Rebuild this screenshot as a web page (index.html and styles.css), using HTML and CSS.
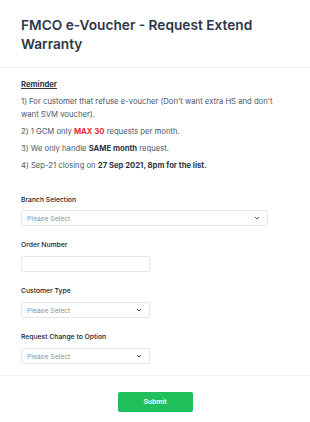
FILE: index.html
```html
<!DOCTYPE html>
<html lang="en">

<head>
    <meta charset="UTF-8">
    <title>FMCO e-Voucher</title>
    <link rel="stylesheet" href="styles.css">
</head>

<body>
    <header class="kop">
        <h1>FMCO e-Voucher - Request Extend Warranty</h1>
    </header>

    <section class="info">
        <p class="reminder">Reminder</p>
        <p>1) For customer that refuse e-voucher (Don't want extra HS and don't want SVM voucher).</p>
        <p>2) 1 GCM only <b class="rod">MAX 30</b> requests per month.</p>
        <p>3) We only handle <b>SAME month</b> request.</p>
        <p>4) Sep-21 closing on <b>27 Sep 2021, 8pm for the list.</b></p>
    </section>

    <form class="felter">
        <div class="felt">
            <label>Branch Selection</label>
            <div class="valg bred">
                <span>Please Select</span>
                <svg width="6" height="4" viewBox="0 0 6 4"><path d="M1 1 L3 3 L5 1" fill="none" stroke="#4a5568" stroke-width="1"/></svg>
            </div>
        </div>
        <div class="felt">
            <label>Order Number</label>
            <div class="input"></div>
        </div>
        <div class="felt">
            <label>Customer Type</label>
            <div class="valg">
                <span>Please Select</span>
                <svg width="6" height="4" viewBox="0 0 6 4"><path d="M1 1 L3 3 L5 1" fill="none" stroke="#4a5568" stroke-width="1"/></svg>
            </div>
        </div>
        <div class="felt sidste">
            <label>Request Change to Option</label>
            <div class="valg">
                <span>Please Select</span>
                <svg width="6" height="4" viewBox="0 0 6 4"><path d="M1 1 L3 3 L5 1" fill="none" stroke="#4a5568" stroke-width="1"/></svg>
            </div>
        </div>
    </form>

    <footer class="bund">
        <button class="send">Submit</button>
    </footer>
</body>

</html>
```

FILE: styles.css
```css
body {
    margin: 0;
    font-family: Inter, "Noto Sans", sans-serif;
    color: #2d3748;
    background-color: white;
}

.kop {
    padding: 16px 21px 13px;
    border-bottom: 1px solid #edf0f3;
}

h1 {
    margin: 0;
    font-size: 13.7px;
    line-height: 19px;
    font-weight: 600;
    color: #2d3748;
}

.info {
    padding: 11px 21px 0;
    font-size: 7.7px;
    color: #4a5568;
}

.info p {
    margin: 0 0 4.5px;
    line-height: 12.5px;
}

.info b {
    color: #2d3748;
}

.reminder {
    font-weight: 700;
    text-decoration: underline;
    color: #2d3748;
}

.rod {
    color: #ef2c2c !important;
}

.felter {
    padding: 19px 21px 11px;
    border-bottom: 1px solid #edf0f3;
}

.felt {
    margin-bottom: 15.6px;
}

.felt.sidste {
    margin-bottom: 0;
}

.felt label {
    display: block;
    font-size: 6.8px;
    line-height: 8.2px;
    font-weight: 500;
    color: #1a202c;
    margin-bottom: 6.6px;
}

.valg,
.input {
    box-sizing: border-box;
    width: 129px;
    height: 15.6px;
    border: 1px solid #e2e8f0;
    border-radius: 2px;
    display: flex;
    align-items: center;
    justify-content: space-between;
    padding: 0 7px 0 5px;
    font-size: 6.8px;
    color: #8a94a6;
}

.bred {
    width: 247px;
}

.bund {
    text-align: center;
    padding-top: 12.5px;
}

.send {
    width: 75px;
    height: 20px;
    border: none;
    border-radius: 2px;
    background-color: #1fbf5b;
    color: white;
    font-family: Inter, sans-serif;
    font-size: 6.8px;
    font-weight: 600;
}
```
